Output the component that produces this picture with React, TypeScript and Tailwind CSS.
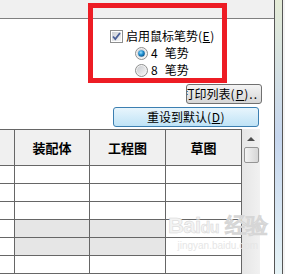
import React from "react";

const font = { fontFamily: '"Noto Sans CJK SC", "Liberation Sans", sans-serif' };

const CheckBox: React.FC = () => (
  <svg width="13" height="13" viewBox="0 0 13 13">
    <defs>
      <linearGradient id="cb" x1="0" y1="0" x2="1" y2="1">
        <stop offset="0" stopColor="#cbcfd5" />
        <stop offset="1" stopColor="#f6f6f6" />
      </linearGradient>
    </defs>
    <rect x="0.5" y="0.5" width="12" height="12" fill="#fff" stroke="#8e8f8f" />
    <rect x="2" y="2" width="9" height="9" fill="url(#cb)" />
    <path d="M3 6.5 L5.3 9 L10 3" fill="none" stroke="#4a5f97" strokeWidth="1.8" />
  </svg>
);

const Radio: React.FC<{ on?: boolean }> = ({ on }) => (
  <svg width="13" height="13" viewBox="0 0 13 13">
    <defs>
      <radialGradient id="ro" cx="0.4" cy="0.35" r="0.7">
        <stop offset="0" stopColor="#9fe3ff" />
        <stop offset="0.5" stopColor="#1f8fd0" />
        <stop offset="1" stopColor="#0c4f83" />
      </radialGradient>
      <linearGradient id="rf" x1="0" y1="0" x2="1" y2="1">
        <stop offset="0" stopColor="#c9cbcf" />
        <stop offset="1" stopColor="#f7f7f7" />
      </linearGradient>
    </defs>
    <circle cx="6.5" cy="6.5" r="6" fill="#f2f2f2" stroke="#8e8f8f" />
    <circle cx="6.5" cy="6.5" r="4.5" fill="url(#rf)" />
    {on && <circle cx="6.5" cy="6.5" r="3.3" fill="url(#ro)" />}
  </svg>
);

const rows = [0, 1, 2, 3, 4, 5];

const App: React.FC = () => {
  return (
    <div className="relative w-[285px] h-[274px] overflow-hidden bg-white flex text-[12px] text-black" style={font}>
      <div className="w-[274px] flex flex-col">
        <div className="h-[19px] bg-[#f0f0f0] border-b border-[#808080]" />

        <div className="h-[112px] flex flex-col pt-[9px]">
          <div className="h-[17px] flex items-center pl-[110px] gap-[3px]">
            <CheckBox />
            <span className="leading-none whitespace-nowrap">
              启用鼠标笔势<span className="tracking-[0.5px]">(<span className="underline">E</span>)</span>
            </span>
          </div>
          <div className="h-[17px] flex items-center pl-[135px] gap-[3px]">
            <Radio on />
            <span className="leading-none whitespace-nowrap">
              4<span className="ml-[7px]">笔势</span>
            </span>
          </div>
          <div className="h-[17px] flex items-center pl-[135px] gap-[3px]">
            <Radio />
            <span className="leading-none whitespace-nowrap">
              8<span className="ml-[7px]">笔势</span>
            </span>
          </div>

          <button className="mt-[5px] ml-[186px] w-[76px] h-[20px] flex items-center justify-end overflow-hidden pr-[3px] rounded-[3px] border border-[#707070] bg-gradient-to-b from-[#f4f4f4] to-[#d6d6d6]">
            <span className="whitespace-nowrap leading-none">
              打印列表<span className="tracking-[1px]">(<span className="underline">P</span>)..</span>
            </span>
          </button>

          <button className="mt-[3px] ml-[113px] w-[146px] h-[20px] flex items-center justify-center rounded-[3px] border border-[#3c7fb1] bg-gradient-to-b from-[#e8f5fc] to-[#bfe3f6]">
            <span className="whitespace-nowrap leading-none">
              重设到默认<span className="tracking-[0.5px]">(<span className="underline">D</span>)</span>
            </span>
          </button>
        </div>

        <div className="flex flex-1">
          <div className="w-[242px] flex flex-col">
            <div className="h-[37px] flex border-t border-b border-[#666] bg-[#f0f0f0] font-bold text-[13px]">
              <div className="w-[15px] border-r border-[#666]" />
              <div className="w-[75px] border-r border-[#666] flex items-center justify-center">装配体</div>
              <div className="w-[76px] border-r border-[#666] flex items-center justify-center">工程图</div>
              <div className="w-[76px] border-r border-[#666] flex items-center justify-center">草图</div>
            </div>
            {rows.map((r) => {
              const gray = r === 3 || r === 4;
              return (
                <div key={r} className="h-[18px] shrink-0 flex border-b border-[#666]">
                  <div className="w-[15px] border-r border-[#666]" />
                  <div className={`w-[75px] border-r border-[#666] ${gray ? "bg-[#e6e6e6]" : ""}`} />
                  <div className={`w-[76px] border-r border-[#666] ${gray ? "bg-[#e6e6e6]" : ""}`} />
                  <div className="w-[76px] border-r border-[#666]" />
                </div>
              );
            })}
          </div>

          <div className="w-[18px] flex flex-col bg-gradient-to-r from-[#e6e6e6] to-[#f1f1f1]">
            <div className="h-[18px] flex items-center justify-center pt-[2px]">
              <div className="w-0 h-0 border-l-[4px] border-r-[4px] border-b-[4px] border-l-transparent border-r-transparent border-b-[#4d4d4d]" />
            </div>
            <div className="ml-[2px] w-[15px] h-[16px] rounded-[2px] border border-[#959595] bg-gradient-to-r from-[#f3f3f3] to-[#d6d6d6]" />
          </div>

          <div className="w-[14px] bg-white" />
        </div>
      </div>

      <div className="w-[1px] bg-[#555]" />
      <div className="w-[7px] bg-gradient-to-b from-[#e4ebd6] via-[#c6d6ee] to-[#e6f3f6]" />
      <div className="w-[1px] bg-[#555]" />
      <div className="flex-1 bg-[#f4f4f4]" />

      <div className="absolute left-[88px] top-[3px] w-[139px] h-[80px] border-[5px] border-[#ed1c24]" />

      <div className="absolute left-[168px] top-[215px] flex flex-col items-center pointer-events-none">
        <span className="text-[22px] font-bold leading-none text-[#f3f3f3] tracking-tight" style={{ fontFamily: '"Liberation Sans", sans-serif', WebkitTextStroke: "0.5px #d6d6d6" }}>
          Bai<span className="text-[16px]">du</span> 经验
        </span>
        <span className="text-[10px] leading-none mt-[4px] text-[#e6e6e6]" style={{ fontFamily: '"Liberation Sans", sans-serif' }}>
          jingyan.baidu.com
        </span>
      </div>
    </div>
  );
};

export default App;
